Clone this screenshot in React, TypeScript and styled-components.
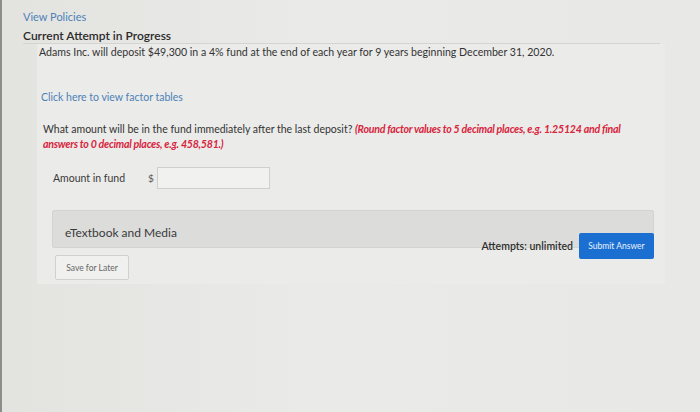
import styled, { createGlobalStyle } from "styled-components";

const GlobalStyle = createGlobalStyle`
    html, body {
        margin:0;
        padding:0;
        background:#e6e6e3;
        font-family:Lato, "Open Sans", sans-serif;
    }
`

const Page = styled.div`
    width:700px;
    height:412px;
    box-sizing:border-box;
    border-left:2px solid #8d8d8b;
    padding:10px 0 0 21px;
    background:linear-gradient(90deg, #e3e3e0 0%, #eaeae8 45%, #e8e8e6 100%);
    overflow:hidden;
`

const LinkText = styled.a`
    display:block;
    color:#4c82b8;
    font-size:11px;
    line-height:14px;
    text-decoration:none;
    cursor:pointer;
`

const AttemptHeading = styled.div`
    margin-top:4px;
    color:#2b2b2b;
    font-size:12px;
    font-weight:600;
    line-height:15px;
`

const Divider = styled.hr`
    margin:0;
    width:637px;
    border:none;
    border-top:1px solid #d4d4d1;
`

const Card = styled.div`
    margin:0 0 0 14px;
    width:628px;
    padding:1px 0 4px 2px;
    background:#ebebe9;
    box-sizing:border-box;
`

const Problem = styled.p`
    margin:0;
    color:#333;
    font-size:10.6px;
    line-height:14px;
`

const FactorLink = styled(LinkText)`
    margin:31px 0 0 2px;
    font-size:10.5px;
`

const Question = styled.p`
    margin:18px 0 0 4px;
    width:600px;
    color:#333;
    font-size:10.5px;
    line-height:15px;
    white-space:nowrap;
`

const Hint = styled.span`
    color:#d8243d;
    font-weight:700;
    font-style:italic;
    font-size:10.6px;
    letter-spacing:-0.25px;
`

const AnswerRow = styled.div`
    display:flex;
    align-items:center;
    margin:15px 0 0 14px;
`

const AnswerLabel = styled.span`
    width:95px;
    color:#3a3a3a;
    font-size:10.5px;
`

const Currency = styled.span`
    width:9px;
    color:#555;
    font-size:10px;
`

const AmountInput = styled.input`
    width:113px;
    height:22px;
    box-sizing:border-box;
    border:1px solid #cfcfcc;
    background:#f1f1ef;
    outline:none;
`

const MediaBar = styled.div`
    display:flex;
    align-items:center;
    margin:21px 0 0 13px;
    width:602px;
    height:38px;
    padding:6px 0 0 12px;
    box-sizing:border-box;
    background:#dcdcda;
    border:1px solid #d3d3d0;
    border-radius:2px;
    color:#3a3a3a;
    font-size:12px;
`

const ActionRow = styled.div`
    display:flex;
    justify-content:space-between;
    align-items:flex-start;
    margin:0 0 0 16px;
    width:599px;
`

const SaveButton = styled.button`
    margin-top:7px;
    width:74px;
    height:25px;
    background:#f0f0ee;
    border:1px solid #d0d0cd;
    border-radius:2px;
    color:#666;
    font-family:inherit;
    font-size:8.5px;
`

const SubmitGroup = styled.div`
    display:flex;
    align-items:center;
    gap:6px;
    margin-top:-15px;
`

const AttemptsText = styled.span`
    color:#2e2e2e;
    font-size:10.5px;
    font-weight:600;
`

const SubmitButton = styled.button`
    width:75px;
    height:26px;
    background:#1b6fd0;
    border:none;
    border-radius:2px;
    color:#e8f1ff;
    font-family:inherit;
    font-size:8.5px;
`

export default function App(){
    return(
        <>
            <GlobalStyle />
            <Page>
                <LinkText>View Policies</LinkText>
                <AttemptHeading>Current Attempt in Progress</AttemptHeading>
                <Divider />
                <Card>
                    <Problem>Adams Inc. will deposit $49,300 in a 4% fund at the end of each year for 9 years beginning December 31, 2020.</Problem>
                    <FactorLink>Click here to view factor tables</FactorLink>
                    <Question>
                        What amount will be in the fund immediately after the last deposit?{" "}
                        <Hint>(Round factor values to 5 decimal places, e.g. 1.25124 and final</Hint>
                        <br />
                        <Hint>answers to 0 decimal places, e.g. 458,581.)</Hint>
                    </Question>
                    <AnswerRow>
                        <AnswerLabel>Amount in fund</AnswerLabel>
                        <Currency>$</Currency>
                        <AmountInput />
                    </AnswerRow>
                    <MediaBar>eTextbook and Media</MediaBar>
                    <ActionRow>
                        <SaveButton>Save for Later</SaveButton>
                        <SubmitGroup>
                            <AttemptsText>Attempts: unlimited</AttemptsText>
                            <SubmitButton>Submit Answer</SubmitButton>
                        </SubmitGroup>
                    </ActionRow>
                </Card>
            </Page>
        </>
    )
}
